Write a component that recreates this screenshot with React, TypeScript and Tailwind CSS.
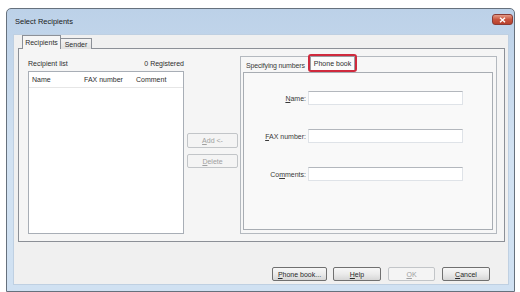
import React from "react";

function Key({ c }: { c: string }) {
  return <span className="underline underline-offset-[1px]">{c}</span>;
}

function Button({
  children,
  disabled,
  className,
}: {
  children: React.ReactNode;
  disabled?: boolean;
  className: string;
}) {
  return (
    <div
      className={
        "h-[14px] flex items-center justify-center rounded-[2px] border " +
        (disabled
          ? "border-[#c2c5c8] bg-[#f4f4f4] text-[#a0a0a0] "
          : "border-[#707070] bg-gradient-to-b from-[#f7f7f7] via-[#ebebeb] to-[#d6d6d6] text-[#2a2a2a] ") +
        className
      }
    >
      {children}
    </div>
  );
}

function Field({ label }: { label: React.ReactNode }) {
  return (
    <div className="flex items-center h-[14px]">
      <div className="w-[62px] text-right text-[#3a3a3a]">{label}</div>
      <div className="ml-[2px] w-[155px] h-[14px] bg-white border border-[#dfe3e8] border-t-[#b3b7bd]" />
    </div>
  );
}

export default function App() {
  return (
    <div className="w-[520px] h-[292px] bg-white overflow-hidden pt-[8px] pl-[6px] font-['Liberation_Sans',Arial,sans-serif] text-[7px] text-[#2e2e2e] leading-none">
      {/* Window frame */}
      <div className="w-[509px] h-[284px] flex flex-col rounded-t-[5px] border border-[#66717d] bg-gradient-to-b from-[#bcd1e8] via-[#d2e2f2] to-[#d0e1f2]">
        {/* Title bar */}
        <div className="h-[25px] flex items-start justify-between pl-[8px] pr-[1px]">
          <span className="mt-[9px] text-[7.5px] text-[#1a1a1a]">Select Recipients</span>
          <div className="mt-[5px] w-[21px] h-[11px] rounded-[3px] border border-[#8a3b35] bg-gradient-to-b from-[#e49a86] via-[#c8543e] to-[#b8412c] flex items-center justify-center">
            <svg width="7" height="6" viewBox="0 0 7 6">
              <path d="M1 0.8 L6 5.2 M6 0.8 L1 5.2" stroke="#fff" strokeWidth="1.4" />
            </svg>
          </div>
        </div>

        {/* Client area */}
        <div className="ml-[6px] mr-[5px] h-[251px] bg-[#f0f0f0] border border-[#bfd0e2] flex flex-col">
          {/* Tabs */}
          <div className="ml-[4px] w-[487px]">
            <div className="flex items-end h-[14px] pl-[4px] relative z-10">
              <div className="h-[14px] w-[39px] border border-b-0 border-[#8c9097] bg-[#f5f5f5] flex items-center justify-center pb-[1px]">
                Recipients
              </div>
              <div className="h-[11px] w-[31px] border border-b-0 border-l-0 border-[#8c9097] bg-gradient-to-b from-[#f4f4f4] to-[#e1e1e1] flex items-center justify-center">
                Sender
              </div>
            </div>
            <div className="-mt-[1px] h-[194px] border border-[#8c9097] bg-[#f5f5f5] flex pl-[9px]">
              {/* Recipient list column */}
              <div className="w-[156px] flex flex-col pt-[7px]">
                <div className="h-[14px] flex items-center justify-between">
                  <span>Recipient list</span>
                  <span>0 Registered</span>
                </div>
                <div className="mt-[1px] h-[163px] border border-[#a8aeb6] bg-white">
                  <div className="h-[16px] flex items-center border-b border-[#e6e6e6] pl-[3px]">
                    <span className="w-[52px]">Name</span>
                    <span className="w-[52px]">FAX number</span>
                    <span>Comment</span>
                  </div>
                </div>
              </div>

              {/* Add / Delete */}
              <div className="ml-[3px] w-[51px] flex flex-col pt-[84px] gap-[6px]">
                <Button disabled className="w-[51px] h-[15px]">
                  <span>
                    <Key c="A" />
                    dd &lt;-
                  </span>
                </Button>
                <Button disabled className="w-[51px]">
                  <span>
                    <Key c="D" />
                    elete
                  </span>
                </Button>
              </div>

              {/* Right group */}
              <div className="ml-[2px] mt-[7px] w-[257px] h-[178px] border border-[#b4b9bf] bg-[#f7f7f7] flex flex-col">
                <div className="h-[15px] flex items-end pl-[1px]">
                  <div className="h-[14px] w-[66px] flex items-center pl-[4px] tracking-[-0.15px] text-[#3a3a3a]">
                    Specifying numbers
                  </div>
                  <div className="-mt-[2px] h-[18px] w-[49px] rounded-[3px] border-2 border-[#cf2a3d] flex">
                    <div className="flex-1 border border-b-0 border-[#9a9ea4] bg-[#fbfbfb] flex items-center justify-center">
                      Phone book
                    </div>
                  </div>
                </div>
                <div className="ml-[2px] w-[250px] h-[158px] border border-[#a8adb3] bg-[#f9f9f9] flex flex-col gap-[24px] pt-[18px]">
                  <Field
                    label={
                      <span>
                        <Key c="N" />
                        ame:
                      </span>
                    }
                  />
                  <Field
                    label={
                      <span>
                        <Key c="F" />
                        AX number:
                      </span>
                    }
                  />
                  <Field
                    label={
                      <span>
                        Co
                        <Key c="m" />
                        ments:
                      </span>
                    }
                  />
                </div>
              </div>
            </div>
          </div>

          {/* Bottom buttons */}
          <div className="mt-[25px] flex justify-end pr-[18px]">
            <Button className="w-[55px]">
              <span>
                <Key c="P" />
                hone book...
              </span>
            </Button>
            <Button className="ml-[6px] w-[48px]">
              <span>
                <Key c="H" />
                elp
              </span>
            </Button>
            <Button disabled className="ml-[7px] w-[47px]">
              <span>
                <Key c="O" />
                K
              </span>
            </Button>
            <Button className="ml-[7px] w-[48px]">
              <span>
                <Key c="C" />
                ancel
              </span>
            </Button>
          </div>
        </div>
      </div>
    </div>
  );
}
